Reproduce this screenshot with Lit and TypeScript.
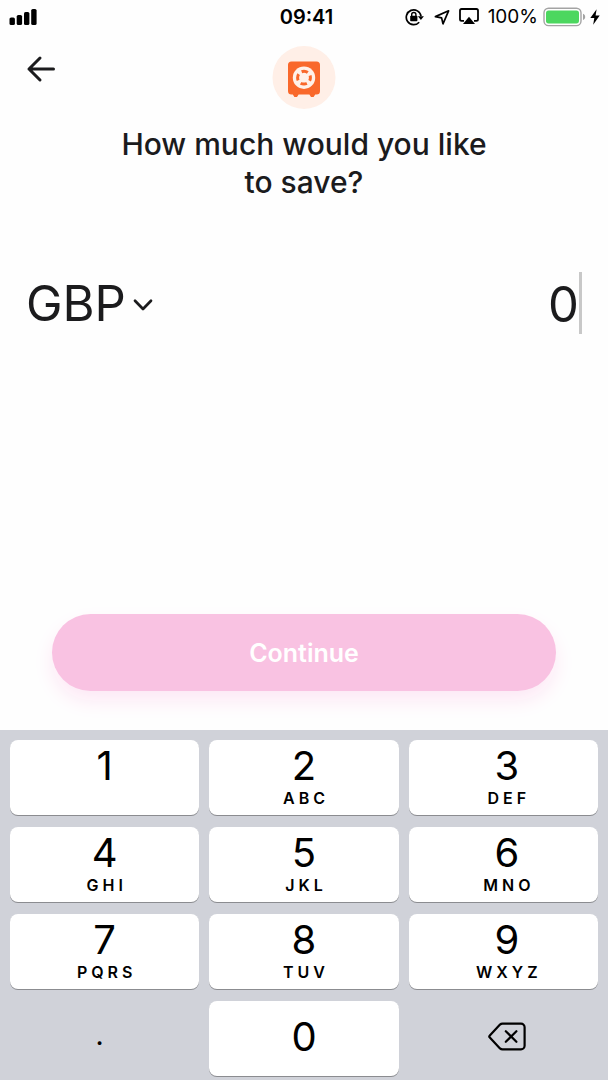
import { LitElement, html, css, svg, nothing } from "lit";
import { customElement, property } from "lit/decorators.js";

@customElement("status-bar")
class StatusBar extends LitElement {
  static styles = css`
    :host {
      display: grid;
      grid-template-columns: 1fr auto 1fr;
      align-items: center;
      height: 33px;
      padding: 0 8px 0 9px;
      color: #000;
    }
    svg {
      display: block;
    }
    .time {
      font-size: 20px;
      font-weight: 600;
      line-height: 24px;
      padding-left: 4px;
    }
    .right {
      display: flex;
      align-items: center;
      justify-content: flex-end;
    }
    .rotation {
      margin-right: 10px;
    }
    .location {
      margin-right: 9px;
    }
    .airplay {
      margin-right: 9px;
    }
    .percent {
      font-size: 19px;
      line-height: 24px;
      margin-right: 5px;
    }
    .battery {
      margin-right: 4px;
    }
  `;

  render() {
    return html`
      <svg width="28" height="18" viewBox="0 0 28 18" role="img" aria-label="Signal">
        <rect x="0.5" y="9.5" width="5.4" height="7.5" rx="1.6" />
        <rect x="7.7" y="7" width="5.4" height="10" rx="1.6" />
        <rect x="15" y="4" width="5.4" height="13" rx="1.6" />
        <rect x="22.2" y="1" width="5.4" height="16" rx="1.6" />
      </svg>
      <span class="time">09:41</span>
      <div class="right">
        <svg class="rotation" width="19" height="18" viewBox="0 0 19 18" role="img" aria-label="Rotation locked">
          <path d="M14.200 14.200A7.400 7.400 0 1 1 16 8.200" fill="none" stroke="#000" stroke-width="1.700" />
          <path d="M12.900 8.200h6L15.900 12z" />
          <rect x="5.200" y="7.800" width="7.200" height="5.400" rx="0.800" />
          <path d="M6.700 8.400V6.600a2.100 2.100 0 0 1 4.200 0v1.800" fill="none" stroke="#000" stroke-width="1.400" />
        </svg>
        <svg class="location" width="16" height="16" viewBox="0 0 16 16" role="img" aria-label="Location in use">
          <path d="M1.400 7.600L14.600 1.800L9 14.800L7.600 8.900z" fill="none" stroke="#000" stroke-width="1.700" stroke-linejoin="round" />
        </svg>
        <svg class="airplay" width="20" height="17" viewBox="0 0 20 17" role="img" aria-label="Screen mirroring">
          <path d="M5 12.800H2.600a1.600 1.600 0 0 1-1.600-1.600V2.600a1.600 1.600 0 0 1 1.600-1.600h14.800a1.600 1.600 0 0 1 1.600 1.600V11.200a1.600 1.600 0 0 1-1.600 1.600H15" fill="none" stroke="#000" stroke-width="1.800" />
          <path d="M10 8.800L16 16H4z" />
        </svg>
        <span class="percent">100%</span>
        <svg class="battery" width="43" height="20" viewBox="0 0 43 20" role="img" aria-label="Battery full">
          <rect x="1" y="1.200" width="37" height="17.400" rx="4.600" fill="none" stroke="#a3a3a3" stroke-width="1.400" />
          <rect x="3" y="3.400" width="33" height="13" rx="2.600" fill="#4cd75f" />
          <path d="M40 6.800c1.400.6 2.200 1.700 2.200 3.100s-.8 2.500-2.200 3.100z" fill="#a3a3a3" />
        </svg>
        <svg width="10" height="16" viewBox="0 0 10 16" role="img" aria-label="Charging">
          <path d="M6.600 0.300L0.300 8.900H4.300L3.200 15.700L9.700 6.600H5.600z" />
        </svg>
      </div>
    `;
  }
}

@customElement("savings-header")
class SavingsHeader extends LitElement {
  static styles = css`
    :host {
      display: grid;
      grid-template-columns: 1fr 64px 1fr;
      align-items: start;
      padding: 12px 26px 0;
    }
    .back {
      display: block;
      width: 30px;
      height: 48px;
      padding: 0;
      border: 0;
      background: none;
      cursor: pointer;
    }
    svg {
      display: block;
    }
    .title {
      grid-column: 1 / -1;
      margin: 16px auto 0;
      max-width: 400px;
      font-size: 30px;
      font-weight: 500;
      line-height: 38px;
      text-align: center;
    }
  `;

  render() {
    return html`
      <button class="back" type="button" aria-label="Back">
        <svg width="30" height="48" viewBox="0 0 30 48" fill="none" stroke="#1b1b1d" stroke-width="3" stroke-linecap="round" stroke-linejoin="round">
          <path d="M27.500 24H3M14 13L3 24L14 35" />
        </svg>
      </button>
      <svg width="64" height="64" viewBox="0 0 64 64" aria-hidden="true">
        <circle cx="32" cy="32.500" r="31.500" fill="#ffefe7" />
        <path d="M19.500 16.500h25a3.500 3.500 0 0 1 3.500 3.500v26a3.500 3.500 0 0 1-3.500 3.500h-1.300l-1.600 2.600h-2.600L37.400 49.500H26.600l-1.600 2.600h-2.600l-1.600-2.600h-1.300a3.500 3.500 0 0 1-3.500-3.500v-26a3.500 3.500 0 0 1 3.500-3.500z" fill="#f9682b" />
        <circle cx="32" cy="32.700" r="11.200" fill="#fff1e9" />
        <circle cx="32" cy="32.700" r="6.400" fill="none" stroke="#f9682b" stroke-width="3" stroke-dasharray="6.450 3.603" stroke-dashoffset="3.225" />
      </svg>
      <h1 class="title">How much would you like<br />to save?</h1>
    `;
  }
}

@customElement("amount-field")
class AmountField extends LitElement {
  static styles = css`
    :host {
      display: flex;
      align-items: center;
      justify-content: space-between;
      padding: 0 26px;
    }
    .currency {
      display: flex;
      align-items: center;
      gap: 7px;
    }
    select,
    input {
      appearance: none;
      box-sizing: border-box;
      height: 62px;
      margin: 0;
      padding: 2px 0 0;
      border: 0;
      border-radius: 0;
      outline: 0;
      background: none;
      color: #1b1b1d;
      font-family: inherit;
      font-size: 49px;
      line-height: 60px;
    }
    input {
      flex: 1;
      min-width: 0;
      border-right: 3px solid #c8c8c8;
      text-align: right;
    }
    svg {
      display: block;
    }
  `;

  render() {
    return html`
      <label class="currency">
        <select aria-label="Currency">
          <option>GBP</option>
        </select>
        <svg width="20" height="18" viewBox="0 0 20 18" fill="none" stroke="#1b1b1d" stroke-width="2.700" stroke-linecap="round" stroke-linejoin="round" aria-hidden="true">
          <path d="M2 6.700L10 15L18 6.700" />
        </svg>
      </label>
      <input type="text" inputmode="decimal" aria-label="Amount" .value=${"0"} />
    `;
  }
}

@customElement("key-button")
class KeyButton extends LitElement {
  @property() digit = "";
  @property() letters = "";
  @property({ type: Boolean }) plain = false;
  @property({ type: Boolean }) centered = false;

  static styles = css`
    :host {
      display: block;
    }
    button {
      display: flex;
      flex-direction: column;
      align-items: center;
      gap: 1px;
      width: 100%;
      height: 75px;
      padding: 5px 0 0 var(--key-inset, 0);
      border: 0;
      border-radius: 8px;
      background: #fff;
      box-shadow: 0 1px 0 #8b8c90;
      color: #000;
      font-family: inherit;
      cursor: pointer;
    }
    .plain {
      background: none;
      box-shadow: none;
    }
    .centered {
      justify-content: center;
      padding-top: 0;
      padding-bottom: 4px;
    }
    .digit {
      font-size: 40px;
      line-height: 42px;
    }
    .letters {
      padding-left: 4px;
      font-size: 16px;
      font-weight: 600;
      line-height: 20px;
      letter-spacing: 4px;
    }
    .point {
      padding-right: 10px;
      font-size: 24px;
      font-weight: 600;
      line-height: 42px;
    }
    svg {
      display: block;
    }
  `;

  private get face() {
    if (this.digit === "delete") {
      return html`<svg width="38" height="29" viewBox="0 0 38 29" fill="none" stroke="#000" stroke-width="2.200" stroke-linecap="round" stroke-linejoin="round" aria-hidden="true">
        ${svg`<path d="M14.500 1.600H33a3.600 3.600 0 0 1 3.600 3.600V23.800a3.600 3.600 0 0 1-3.600 3.600H14.500a3.600 3.600 0 0 1-2.500-1L1.800 15.600a1.600 1.600 0 0 1 0-2.200L12 2.600a3.600 3.600 0 0 1 2.500-1z" /><path d="M17.800 9.200L28.400 19.800M28.400 9.200L17.800 19.800" />`}
      </svg>`;
    }
    return html`<span class=${this.digit === "." ? "point" : "digit"}>${this.digit}</span>
      ${this.letters ? html`<span class="letters">${this.letters}</span>` : nothing}`;
  }

  render() {
    return html`<button
      type="button"
      class="${this.plain ? "plain" : ""} ${this.centered ? "centered" : ""}"
      aria-label=${this.digit === "delete" ? "Delete" : nothing}
    >${this.face}</button>`;
  }
}

const KEYS: [string, string][] = [
  ["1", ""],
  ["2", "ABC"],
  ["3", "DEF"],
  ["4", "GHI"],
  ["5", "JKL"],
  ["6", "MNO"],
  ["7", "PQRS"],
  ["8", "TUV"],
  ["9", "WXYZ"],
];

@customElement("number-pad")
class NumberPad extends LitElement {
  static styles = css`
    :host {
      display: grid;
      grid-template-columns: repeat(3, 1fr);
      gap: 12px 10px;
      padding: 10px 10px 4px;
      background: #d0d2d9;
    }
    key-button:nth-child(3n) {
      --key-inset: 7px;
    }
  `;

  render() {
    return html`
      ${KEYS.map(([digit, letters]) => html`<key-button digit=${digit} letters=${letters}></key-button>`)}
      <key-button digit="." plain centered></key-button>
      <key-button digit="0" centered></key-button>
      <key-button digit="delete" plain centered></key-button>
    `;
  }
}

@customElement("app-root")
class AppRoot extends LitElement {
  static styles = css`
    :host {
      display: flex;
      flex-direction: column;
      min-height: 100vh;
      background: #fefefe;
      color: #1b1b1d;
      font-family: Inter, "Liberation Sans", sans-serif;
    }
    amount-field {
      margin-top: 71px;
    }
    .actions {
      display: flex;
      margin-top: auto;
      padding: 24px 52px 39px;
    }
    .continue {
      flex: 1;
      height: 77px;
      border: 0;
      border-radius: 39px;
      background: #f9c2e2;
      box-shadow: 0 10px 20px #fde8f5;
      color: #fff;
      font-family: inherit;
      font-size: 25px;
      font-weight: 600;
      line-height: 32px;
      cursor: pointer;
    }
  `;

  render() {
    return html`
      <status-bar></status-bar>
      <savings-header></savings-header>
      <amount-field></amount-field>
      <div class="actions">
        <button class="continue" type="button">Continue</button>
      </div>
      <number-pad></number-pad>
    `;
  }
}
